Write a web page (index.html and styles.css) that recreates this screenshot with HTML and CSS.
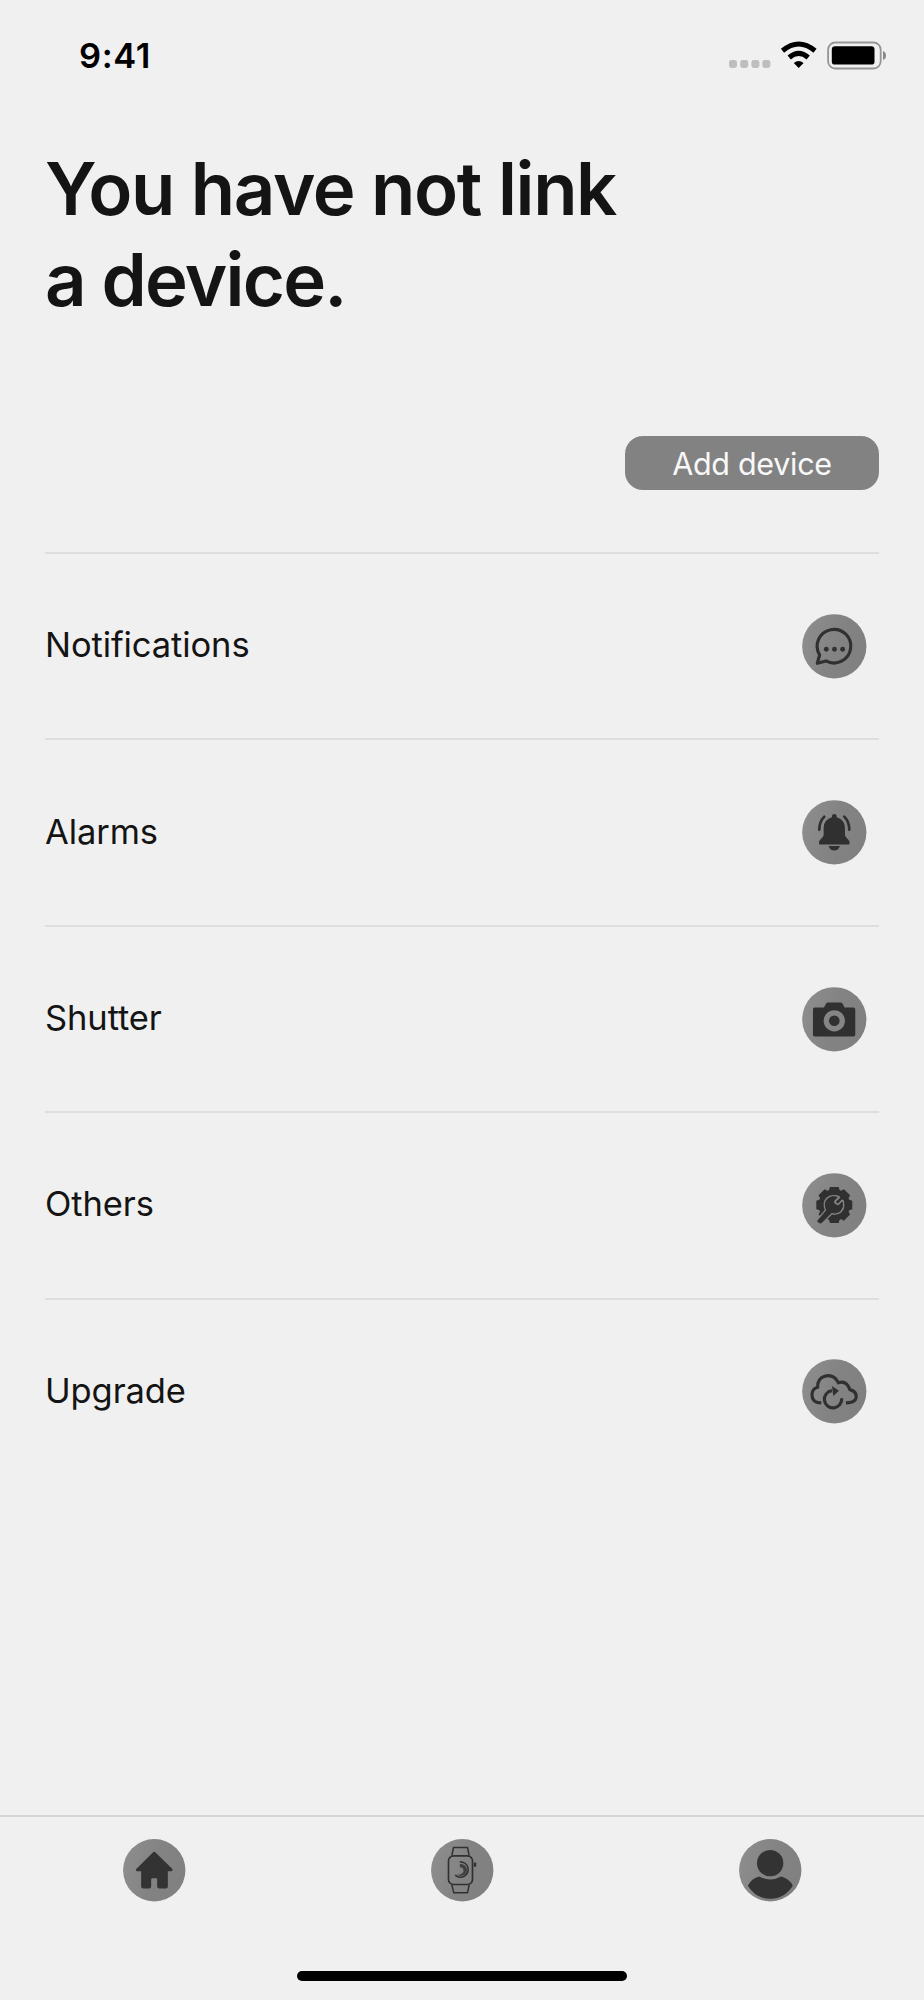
FILE: index.html
```html
<!DOCTYPE html>
<html lang="en">
<head>
<meta charset="utf-8">
<title>Devices</title>
<link rel="stylesheet" href="styles.css">
</head>
<body>
<div class="screen">
  <header class="status">
    <span class="time">9:41</span>
    <svg class="indicators" width="164" height="34" viewBox="0 0 164 34">
      <g fill="#bebebe"><rect x="2" y="20" width="8" height="8" rx="2.4"/><rect x="13.2" y="20" width="8" height="8" rx="2.4"/><rect x="24.4" y="20" width="8" height="8" rx="2.4"/><rect x="35.4" y="20" width="8" height="8" rx="2.4"/></g>
      <g fill="none" stroke="#000" stroke-width="5"><path d="M55.500 10.7Q71.7-2.7 88 10.7"/><path d="M62.2 17.5Q71.7 9.3 81.2 17.5"/></g>
      <path d="M66.8 22.9Q71.7 19.1 76.6 22.9L71.7 28Z"/>
      <rect x="101.1" y="2.5" width="52.6" height="26" rx="7.2" fill="none" stroke="#959595" stroke-width="1.8"/>
      <rect x="104.8" y="6.2" width="42.7" height="18.4" rx="3.2"/>
      <path d="M156 11Q159 12 159 15.5T156 20Z" fill="#888"/>
    </svg>
  </header>
  <main class="content">
    <h1 class="title"><span class="line">You have not link</span><span class="line line-short">a device.</span></h1>
    <div class="actions"><button class="add">Add device</button></div>
    <ul class="menu">
      <li class="row"><span class="label">Notifications</span>
        <svg class="icon" viewBox="37 41 194 194"><defs><linearGradient id="disc" x1="0" y1=".35" x2="1" y2=".65"><stop stop-color="#8d8d8d"/><stop offset=".5" stop-color="#838383"/><stop offset="1" stop-color="#808080"/></linearGradient></defs>
          <circle cx="134" cy="138" r="96.500" fill="url(#disc)"/>
          <path d="M83 189L90 164A50.500 50.500 0 1 1 109 182Q98 185 83 189Z" fill="none" stroke="#303030" stroke-width="9.500" stroke-linejoin="round"/>
          <g fill="#303030"><circle cx="110" cy="147" r="7.300"/><circle cx="134.500" cy="147" r="7.300"/><circle cx="159" cy="147" r="7.300"/></g></svg></li>
      <li class="row"><span class="label">Alarms</span>
        <svg class="icon" viewBox="37 45 194 194"><circle cx="134" cy="142" r="96.500" fill="url(#disc)"/>
          <path d="M127 97V92Q128 87 134 87T141 92V97Q165 104 166 128V151Q167 157 177 165Q183 171 179 179H89Q85 171 91 165Q101 157 102 151V128Q103 104 127 97ZM117 183H151Q146 197 134 197T117 183Z" fill="#303030"/>
          <path d="M104 95Q89 110 89 134M164 95Q179 110 179 134" fill="none" stroke="#303030" stroke-width="8" stroke-linecap="round"/></svg></li>
      <li class="row"><span class="label">Shutter</span>
        <svg class="icon" viewBox="37 34.500 194 194"><circle cx="134" cy="131.500" r="96.500" fill="url(#disc)"/>
          <path d="M75 96H103L109 85Q111 81 115 81H153Q157 81 159 85L165 96H192Q197 96 197 101V178Q197 183 192 183H75Q70 183 70 178V101Q70 96 75 96Z" fill="#303030"/>
          <circle cx="134" cy="136" r="24" fill="#303030" stroke="#858585" stroke-width="16"/></svg></li>
      <li class="row"><span class="label">Others</span>
        <svg class="icon" viewBox="37 39 194 194"><circle cx="134" cy="136" r="96.500" fill="url(#disc)"/>
          <g fill="#303030"><circle cx="134" cy="135" r="47"/>
            <path id="tooth" d="M117 94L121 81H147L151 94V176L147 189H121L117 176Z"/><use href="#tooth" transform="rotate(45 134 135)"/><use href="#tooth" transform="rotate(90 134 135)"/><use href="#tooth" transform="rotate(135 134 135)"/></g>
          <path d="M84 183L111 151Q101 128 115 116Q127 106 146 112L133 124L137 133L147 136L158 124Q163 143 151 154Q140 162 126 158L95 189Z" fill="#858585" stroke="#858585" stroke-width="10" stroke-linejoin="round"/>
          <path d="M84 183L111 151Q101 128 115 116Q127 106 143 112L132 123Q131 135 147 137L158 126Q162 143 151 154Q140 162 126 158L95 189Q88 191 84 183Z" fill="#303030" stroke="#303030" stroke-width="3" stroke-linejoin="round"/></svg></li>
      <li class="row"><span class="label">Upgrade</span>
        <svg class="icon" viewBox="37 42 194 194"><circle cx="134" cy="139" r="96.500" fill="url(#disc)"/>
          <g fill="none" stroke="#303030" stroke-width="9.500"><path d="M95 174Q67 173 67 149Q67 132 84 127Q83 101 105 94Q132 86 146 113Q171 105 181 134Q201 139 200 157Q197 174 169 174"/><path d="M127 137A26 26 0 1 0 156 160"/></g>
          <path d="M127 123L148 137L131 153Z" fill="#303030"/></svg></li>
    </ul>
  </main>
  <nav class="tabs">
    <a class="tab"><svg class="tab-icon" viewBox="38.500 117.500 187.500 187.500"><circle cx="132.250" cy="211.250" r="93.500" fill="url(#disc)"/><path d="M128 158Q132 154 136 158L186 207Q190 214 182 214H173V260Q173 266 167 266H147Q141 266 141 260V239Q141 235 137 235H127Q123 235 123 239V260Q123 266 117 266H99Q93 266 93 260V214H82Q74 214 79 207Z" fill="#333"/></svg></a>
    <a class="tab"><svg class="tab-icon" viewBox="47.500 117.500 187.500 187.500"><circle cx="141.250" cy="211.250" r="93.500" fill="url(#disc)"/>
      <g fill="none" stroke="#303030" stroke-width="4.500"><rect x="100" y="168" width="72" height="86" rx="15" stroke-width="5"/><path d="M110 167L115 143H157L162 167M110 255L116 279H157L162 255"/><path d="M120 226Q132 237 148 229Q162 219 158 202Q153 187 134 186"/></g>
      <path d="M134 192Q150 193 155 206Q157 219 146 226Q135 230 125 225Q141 225 145 215Q146 202 134 202Z" fill="#404040"/><rect x="176" y="188" width="7" height="13" rx="2" fill="#303030"/></svg></a>
    <a class="tab"><svg class="tab-icon" viewBox="41.500 117.500 187.500 187.500"><circle cx="135.250" cy="211.250" r="93.500" fill="url(#disc)"/><circle cx="135" cy="190" r="39.500" fill="#333"/><path d="M103 230Q135 248 168 230Q195 238 203 258Q178 297 135 297T68 258Q78 236 103 230Z" fill="#333"/></svg></a>
  </nav>
  <div class="home-bar"></div>
</div>
</body>
</html>
```
FILE: styles.css
```css
* { box-sizing: border-box; }
body { margin: 0; background: #f0f0f0; color: #141414; font-family: Inter, "Liberation Sans", sans-serif; }
svg { overflow: visible; }
.screen { width: 924px; height: 2000px; display: flex; flex-direction: column; overflow: hidden; }
.status { display: flex; justify-content: space-between; align-items: flex-start; height: 144px; padding: 39px 33px 0 79px; color: #000; }
.time { font-size: 34.500px; line-height: 34px; font-weight: 600; letter-spacing: .6px; }
.indicators { display: block; margin-top: 1px; }
.content { padding: 0 45px; }
.title { margin: 0; font-size: 72.500px; line-height: 90.500px; font-weight: 600; white-space: nowrap; }
.line { display: block; letter-spacing: -1.380px; }
.line-short { letter-spacing: -1.750px; }
.actions { display: flex; justify-content: flex-end; padding-top: 111px; }
.add { width: 254px; height: 54px; padding: 1px 0 0; border: 0; border-radius: 18px; background: #828282; color: #f8f8f8; font: 400 30.500px/53px Inter, "Liberation Sans", sans-serif; letter-spacing: -.3px; }
.menu { list-style: none; margin: 62px 0 0; padding: 0; }
.row { display: flex; justify-content: space-between; align-items: center; height: 186.400px; padding-right: 12px; border-top: 2px solid #dedede; }
.label { font-size: 34.500px; letter-spacing: -.1px; padding-bottom: 3px; }
.icon { width: 64.600px; height: 64.600px; }
.tabs { display: flex; margin-top: auto; height: 156px; padding-top: 22px; border-top: 2px solid #d5d5d5; }
.tab { flex: 1; display: flex; justify-content: center; }
.tab-icon { width: 62.500px; height: 62.500px; }
.home-bar { width: 330px; height: 10px; margin: 0 auto 19px; border-radius: 5px; background: #000; }
```
